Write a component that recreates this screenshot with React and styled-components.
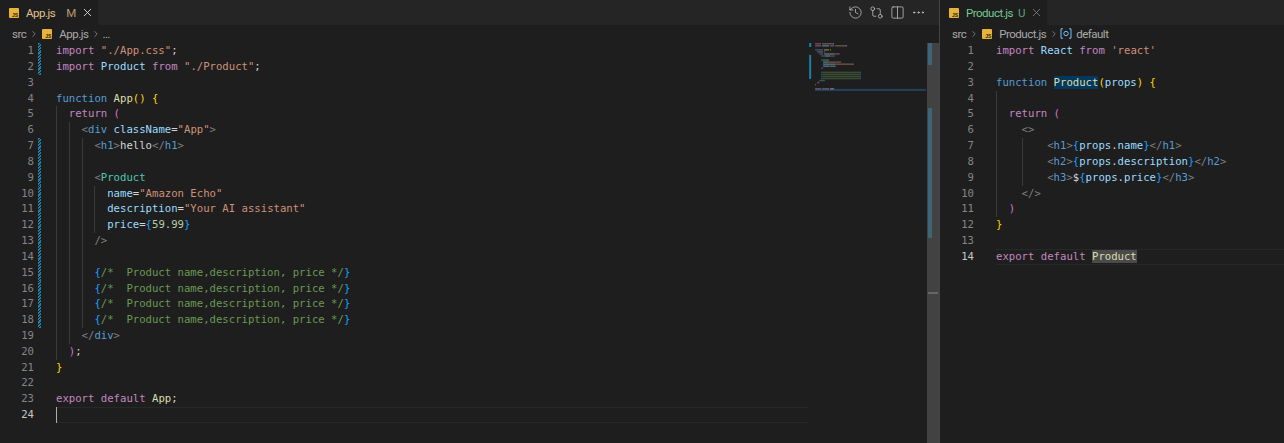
import React from "react";
import styled, { createGlobalStyle } from "styled-components";
import { History, GitCompare, Columns2, Ellipsis, X, ChevronRight } from "lucide-react";

const CHAR = 6.4;
const LINE = 15.83;

const C = {
  kw: "#c586c0", blue: "#569cd6", vari: "#9cdcfe", fn: "#dcdcaa", str: "#ce9178", com: "#6a9955",
  tag: "#808080", comp: "#4ec9b0", y: "#ffd700", p: "#da70d6", b: "#179fff", num: "#b5cea8", t: "#d4d4d4",
};

const GlobalStyle = createGlobalStyle`
  html, body { margin: 0; padding: 0; height: 100%; background: #1e1e1e; overflow: hidden; }
  #root { height: 100%; }
`;

const Workbench = styled.div`
  display: flex;
  width: 1284px;
  height: 443px;
  background: #1e1e1e;
  overflow: hidden;
`;
const Pane = styled.section`
  display: flex;
  flex-direction: column;
  flex: ${(p) => (p.$grow ? "1 1 0" : "0 0 940px")};
  min-width: 0;
  border-right: ${(p) => (p.$grow ? "none" : "1px solid #444444")};
  box-sizing: border-box;
`;
const TabBar = styled.div`
  display: flex;
  align-items: stretch;
  justify-content: space-between;
  height: 25px;
  flex: none;
  background: #252526;
`;
const Tab = styled.div`
  display: flex;
  align-items: center;
  width: ${(p) => p.$w}px;
  box-sizing: border-box;
  padding-left: 9px;
  background: #1e1e1e;
  font: 11.5px "Roboto", sans-serif;
  letter-spacing: -0.5px;
`;
const TabName = styled.span`
  margin-left: 7px;
  color: ${(p) => p.$c};
`;
const TabBadge = styled.span`
  margin-left: ${(p) => p.$m}px;
  color: ${(p) => p.$c};
  font-size: 11.5px;
  letter-spacing: 0;
  opacity: 0.75;
`;
const TabClose = styled.span`
  display: flex;
  margin-left: ${(p) => p.$m}px;
  color: ${(p) => p.$c};
`;
const FileIcon = styled.span`
  display: inline-flex;
  align-items: flex-end;
  justify-content: flex-end;
  box-sizing: border-box;
  flex: none;
  width: 10px;
  height: 10px;
  padding: 0 1px 0 0;
  border-radius: 1px;
  background: #e8b33a;
  color: #2a2510;
  letter-spacing: 0;
  font: 700 5px/6px "Liberation Sans", sans-serif;
`;
const Actions = styled.div`
  display: flex;
  align-items: center;
  gap: 6px;
  padding-right: 13px;
  color: #c5c5c5;
`;
const Crumbs = styled.div`
  display: flex;
  align-items: center;
  height: 17px;
  flex: none;
  padding-left: 12px;
  color: #a9a9a9;
  font: 11.5px "Roboto", sans-serif;
  letter-spacing: -0.5px;
`;
const Sep = styled.span`
  display: flex;
  margin: 0 ${(p) => p.$r}px 0 3px;
  color: #b5b5b5;
`;
const CrumbName = styled.span`
  margin-left: 7px;
`;
const SymbolIcon = styled.svg`
  width: 12px;
  height: 11px;
  margin-right: 4px;
  flex: none;
`;
const EditorRow = styled.div`
  display: flex;
  flex: 1;
  min-height: 0;
  padding-top: 1.1px;
`;
const Gutter = styled.div`
  flex: none;
  width: 56px;
`;
const GutterLine = styled.div`
  display: flex;
  justify-content: flex-end;
  height: ${LINE}px;
  box-sizing: border-box;
  padding-right: 22px;
  color: ${(p) => (p.$active ? "#c6c6c6" : "#858585")};
  background-image: ${(p) =>
    p.$dirty
      ? "repeating-linear-gradient(-45deg, #1b81a8 0 1.6px, #1e1e1e 1.6px 2.4px)"
      : "none"};
  background-size: 3px 100%;
  background-position: 38px 0;
  background-repeat: no-repeat;
  font: 10.6px/${LINE}px "DejaVu Sans Mono", monospace;
`;
const Code = styled.div`
  flex: 1;
  min-width: 0;
`;
const Line = styled.div`
  position: relative;
  height: ${LINE}px;
  box-sizing: border-box;
  white-space: pre;
  color: #d4d4d4;
  font: 10.63px/${LINE}px "DejaVu Sans Mono", monospace;
  background-image: ${(p) =>
    p.$guides.length
      ? p.$guides.map(() => "linear-gradient(#3a3a3a, #3a3a3a)").join(",")
      : "none"};
  background-size: 1px 100%;
  background-repeat: no-repeat;
  background-position: ${(p) => p.$guides.map((g) => `${g * CHAR}px 0`).join(",") || "0 0"};
  ${(p) =>
    p.$active
      ? `box-shadow: inset 0 1px 0 #282828, inset 0 -1px 0 #282828;`
      : ""}
`;
const Cursor = styled.span`
  position: absolute;
  left: 0;
  top: 0;
  width: 1px;
  height: 100%;
  background: #aeafad;
`;
const Tok = styled.span`
  color: ${(p) => p.$c};
  background: ${(p) => p.$bg || "transparent"};
`;
const Minimap = styled.svg`
  flex: none;
  width: 119px;
  height: 100%;
  margin-top: -1.1px;
`;
const Ruler = styled.div`
  flex: none;
  position: relative;
  width: 12px;
  background: #424242;
`;
const RulerMark = styled.div`
  position: absolute;
  left: 1px;
  top: ${(p) => p.$t}px;
  width: 4px;
  height: ${(p) => p.$h}px;
  background: #3e6477;
`;
const RulerTick = styled.div`
  position: absolute;
  left: 1px;
  right: 1px;
  top: 249px;
  height: 2px;
  background: #666666;
`;

const sp = (n) => " ".repeat(n);
const comment = [
  [sp(6), C.t], ["{", C.b], ["/*  Product name,description, price */", C.com], ["}", C.b],
];

const appLines = [
  { d: 1, g: [], t: [["import", C.kw], [" ", C.t], ['"./App.css"', C.str], [";", C.t]] },
  { d: 1, g: [], t: [["import", C.kw], [" ", C.t], ["Product", C.vari], [" ", C.t], ["from", C.kw], [" ", C.t], ['"./Product"', C.str], [";", C.t]] },
  { g: [], t: [] },
  { g: [], t: [["function", C.blue], [" ", C.t], ["App", C.fn], ["()", C.y], [" ", C.t], ["{", C.y]] },
  { g: [0], t: [["  ", C.t], ["return", C.kw], [" ", C.t], ["(", C.p]] },
  { g: [0, 2], t: [[sp(4), C.t], ["<", C.tag], ["div", C.blue], [" ", C.t], ["className", C.vari], ["=", C.t], ['"App"', C.str], [">", C.tag]] },
  { d: 1, g: [0, 2, 4], t: [[sp(6), C.t], ["<", C.tag], ["h1", C.blue], [">", C.tag], ["hello", C.t], ["</", C.tag], ["h1", C.blue], [">", C.tag]] },
  { d: 1, g: [0, 2, 4], t: [] },
  { d: 1, g: [0, 2, 4], t: [[sp(6), C.t], ["<", C.tag], ["Product", C.comp]] },
  { d: 1, g: [0, 2, 4, 6], t: [[sp(8), C.t], ["name", C.vari], ["=", C.t], ['"Amazon Echo"', C.str]] },
  { d: 1, g: [0, 2, 4, 6], t: [[sp(8), C.t], ["description", C.vari], ["=", C.t], ['"Your AI assistant"', C.str]] },
  { d: 1, g: [0, 2, 4, 6], t: [[sp(8), C.t], ["price", C.vari], ["=", C.t], ["{", C.b], ["59.99", C.num], ["}", C.b]] },
  { d: 1, g: [0, 2, 4], t: [[sp(6), C.t], ["/>", C.tag]] },
  { d: 1, g: [0, 2, 4], t: [] },
  { d: 1, g: [0, 2, 4], t: comment },
  { d: 1, g: [0, 2, 4], t: comment },
  { d: 1, g: [0, 2, 4], t: comment },
  { d: 1, g: [0, 2, 4], t: comment },
  { g: [0, 2], t: [[sp(4), C.tag], ["</", C.tag], ["div", C.blue], [">", C.tag]] },
  { g: [0], t: [["  ", C.t], [")", C.p], [";", C.t]] },
  { g: [], t: [["}", C.y]] },
  { g: [], t: [] },
  { g: [], t: [["export", C.kw], [" ", C.t], ["default", C.kw], [" ", C.t], ["App", C.fn], [";", C.t]] },
  { g: [], a: 1, cursor: 1, t: [] },
];

const productLines = [
  { g: [], t: [["import", C.kw], [" ", C.t], ["React", C.vari], [" ", C.t], ["from", C.kw], [" ", C.t], ["'react'", C.str]] },
  { g: [], t: [] },
  { g: [], t: [["function", C.blue], [" ", C.t], ["Product", C.fn, "#04395e"], ["(", C.y], ["props", C.vari], [")", C.y], [" ", C.t], ["{", C.y]] },
  { g: [0], t: [] },
  { g: [0], t: [["  ", C.t], ["return", C.kw], [" ", C.t], ["(", C.p]] },
  { g: [0], t: [[sp(4), C.t], ["<>", C.tag]] },
  { g: [0, 4], t: [[sp(8), C.t], ["<", C.tag], ["h1", C.blue], [">", C.tag], ["{", C.b], ["props", C.vari], [".", C.t], ["name", C.vari], ["}", C.b], ["</", C.tag], ["h1", C.blue], [">", C.tag]] },
  { g: [0, 4], t: [[sp(8), C.t], ["<", C.tag], ["h2", C.blue], [">", C.tag], ["{", C.b], ["props", C.vari], [".", C.t], ["description", C.vari], ["}", C.b], ["</", C.tag], ["h2", C.blue], [">", C.tag]] },
  { g: [0, 4], t: [[sp(8), C.t], ["<", C.tag], ["h3", C.blue], [">", C.tag], ["$", C.t], ["{", C.b], ["props", C.vari], [".", C.t], ["price", C.vari], ["}", C.b], ["</", C.tag], ["h3", C.blue], [">", C.tag]] },
  { g: [0], t: [[sp(4), C.t], ["</>", C.tag]] },
  { g: [0], t: [["  ", C.t], [")", C.p]] },
  { g: [], t: [["}", C.y]] },
  { g: [], t: [] },
  { g: [], a: 1, t: [["export", C.kw], [" ", C.t], ["default", C.kw], [" ", C.t], ["Product", C.fn, "#4a4a4a"]] },
];

const Editor = ({ lines, children }) => (
  <EditorRow>
    <Gutter>
      {lines.map((l, i) => (
        <GutterLine key={i} $active={l.a} $dirty={l.d}>{i + 1}</GutterLine>
      ))}
    </Gutter>
    <Code>
      {lines.map((l, i) => (
        <Line key={i} $guides={l.g} $active={l.a}>
          {l.cursor ? <Cursor /> : null}
          {l.t.map(([text, c, bg], j) => (
            <Tok key={j} $c={c} $bg={bg}>{text}</Tok>
          ))}
        </Line>
      ))}
    </Code>
    {children}
  </EditorRow>
);

const MiniCode = ({ lines }) => (
  <Minimap viewBox="0 0 119 401">
    <rect x="1" y="1" width="2" height="4" fill="#1b81a8" />
    <rect x="1" y="13" width="2" height="24" fill="#1b81a8" />
    <rect x="7" y="47" width="111" height="2" fill="#264f78" opacity="0.75" />
    {lines.map((l, i) => {
      let col = 0;
      return l.t.map(([text, c], j) => {
        const x = col;
        col += text.length;
        return text.trim() ? (
          <rect key={`${i}-${j}`} x={7 + x} y={1 + i * 2.05} width={text.length} height="1.5" fill={c} opacity={c === C.com ? 0.38 : 0.42} />
        ) : null;
      });
    })}
  </Minimap>
);

const Js = () => <FileIcon>JS</FileIcon>;

const Namespace = () => (
  <SymbolIcon viewBox="0 0 12 11" fill="none" stroke="#75beff" strokeWidth="1">
    <path d="M3 .8H1v9.4h2M9 .8h2v9.4H9" />
    <circle cx="6" cy="5.5" r="2.2" />
  </SymbolIcon>
);

export default function App() {
  return (
    <Workbench>
      <GlobalStyle />
      <Pane>
        <TabBar>
          <Tab $w={98}>
            <Js />
            <TabName $c="#e2c08d">App.js</TabName>
            <TabBadge $c="#e2c08d" $m={11}>M</TabBadge>
            <TabClose $c="#e4e4e4" $m={5}><X size={13} strokeWidth={1.6} /></TabClose>
          </Tab>
          <Actions>
            <History size={15} strokeWidth={1.2} />
            <GitCompare size={15} strokeWidth={1.2} />
            <Columns2 size={15} strokeWidth={1.2} />
            <Ellipsis size={15} strokeWidth={1.5} />
          </Actions>
        </TabBar>
        <Crumbs>
          src<Sep $r={3}><ChevronRight size={10} strokeWidth={1.4} /></Sep>
          <Js /><CrumbName>App.js</CrumbName>
          <Sep $r={1}><ChevronRight size={10} strokeWidth={1.4} /></Sep>…
        </Crumbs>
        <Editor lines={appLines}>
          <MiniCode lines={appLines} />
          <Ruler>
            <RulerMark $t={0} $h={22} />
            <RulerMark $t={65} $h={130} />
            <RulerTick />
          </Ruler>
        </Editor>
      </Pane>
      <Pane $grow>
        <TabBar>
          <Tab $w={107}>
            <Js />
            <TabName $c="#73c991">Product.js</TabName>
            <TabBadge $c="#73c991" $m={5}>U</TabBadge>
            <TabClose $c="#8a8a8a" $m={5}><X size={13} strokeWidth={1.4} /></TabClose>
          </Tab>
        </TabBar>
        <Crumbs>
          src<Sep $r={3}><ChevronRight size={10} strokeWidth={1.4} /></Sep>
          <Js /><CrumbName>Product.js</CrumbName>
          <Sep $r={1}><ChevronRight size={10} strokeWidth={1.4} /></Sep>
          <Namespace />default
        </Crumbs>
        <Editor lines={productLines} />
      </Pane>
    </Workbench>
  );
}
